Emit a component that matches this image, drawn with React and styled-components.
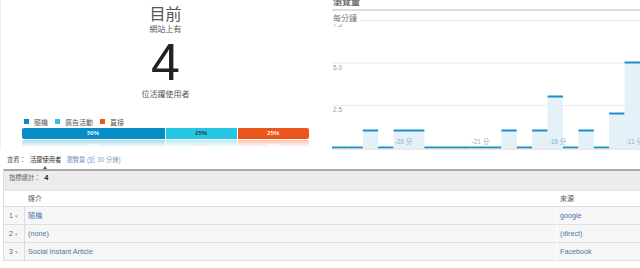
import React from "react";
import styled, { createGlobalStyle } from "styled-components";

const GlobalStyle = createGlobalStyle`
  html, body {
    margin: 0;
    padding: 0;
    background: #fff;
  }
  body {
    width: 640px;
    height: 268px;
    overflow: hidden;
    font-family: "Liberation Sans", "Noto Sans CJK TC", Arial, sans-serif;
    color: #333;
  }
`;

const sources = [
  { label: "隨機", color: "#058dc7", share: 50, text: "#fff" },
  { label: "廣告活動", color: "#24c6e3", share: 25, text: "#333" },
  { label: "直接", color: "#ed561b", share: 25, text: "#fff" },
];

const perMinute = [0, 0, 1, 0, 1, 1, 0, 0, 0, 0, 0, 1, 0, 1, 3, 0, 1, 0, 2, 5, 4];
const minuteLabels = { 4: "-26 分", 9: "-21 分", 14: "-16 分", 19: "-11 分" };

const rows = [
  { medium: "隨機", source: "google" },
  { medium: "(none)", source: "(direct)" },
  { medium: "Social Instant Article", source: "Facebook" },
];

// chart geometry
const STEP = 15.4;
const UNIT = 17;
const BASE = 137;

const PageviewChart = () => (
  <svg width="308" height="139" style={{ display: "block" }}>
    {[7.5, 5.0, 2.5].map((v) => {
      const y = BASE - v * UNIT;
      return (
        <g key={v}>
          <line x1="0" x2="308" y1={y} y2={y} stroke="#ececec" strokeWidth="1" />
          <text x="1" y={y + 6.5} fontSize="6.5" fill="#999" fontFamily="Liberation Sans, sans-serif">
            {v.toFixed(1)}
          </text>
        </g>
      );
    })}
    <rect x="0" y="0" width="28" height="13" fill="#fff" />
    <text x="1" y="10" fontSize="8" fill="#777" fontFamily="Liberation Sans, Noto Sans CJK TC, sans-serif">
      每分鐘
    </text>
    {perMinute.map((v, i) => {
      const x = i * STEP;
      const top = BASE - v * UNIT;
      return (
        <g key={i}>
          {v > 0 && <rect x={x} y={top} width={STEP} height={BASE - top} fill="#e4f1f9" />}
          <rect x={x} y={top - 1.5} width={STEP} height="2" fill="#1a8fca" />
        </g>
      );
    })}
    <line x1="0" x2="308" y1={BASE + 1} y2={BASE + 1} stroke="#d4d4d4" strokeWidth="1" />
    {Object.entries(minuteLabels).map(([i, label]) => (
      <text
        key={i}
        x={i * STEP + 1}
        y="133"
        fontSize="6.5"
        fill="#8fb0cf"
        fontFamily="Liberation Sans, Noto Sans CJK TC, sans-serif"
      >
        {label}
      </text>
    ))}
  </svg>
);

const App = () => {
  return (
    <>
      <GlobalStyle />
      <Page>
        <TopRow>
          <Summary>
            <Now>目前</Now>
            <Sub>網站上有</Sub>
            <Count>4</Count>
            <Sub $gap>位活躍使用者</Sub>
            <Legend>
              {sources.map((s) => (
                <LegendItem key={s.label} $color={s.color}>
                  {s.label}
                </LegendItem>
              ))}
            </Legend>
            <ShareBar>
              {sources.map((s) => (
                <Segment key={s.label} $share={s.share} $color={s.color} $text={s.text}>
                  {s.share}%
                </Segment>
              ))}
            </ShareBar>
          </Summary>
          <ChartPanel>
            <ChartTitle>瀏覽量</ChartTitle>
            <PageviewChart />
          </ChartPanel>
        </TopRow>

        <ViewRow>
          <ViewLabel>查看：</ViewLabel>
          <Tab $active>活躍使用者</Tab>
          <Tab>
            瀏覽量<Muted> (近 30 分鐘)</Muted>
          </Tab>
        </ViewRow>

        <Table>
          <Totals>
            指標總計： <strong>4</strong>
          </Totals>
          <HeaderRow>
            <IndexCell />
            <Cell>媒介</Cell>
            <Cell>來源</Cell>
          </HeaderRow>
          {rows.map((r, i) => (
            <DataRow key={r.medium}>
              <IndexCell>
                {i + 1}
                <Caret>▾</Caret>
              </IndexCell>
              <Cell $line="#dcdcdc">
                <Link>{r.medium}</Link>
              </Cell>
              <Cell $line="#fff">
                <Link>{r.source}</Link>
              </Cell>
            </DataRow>
          ))}
        </Table>
      </Page>
    </>
  );
};

//Styled Components
const Page = styled.div`
  width: 640px;
  display: flex;
  flex-direction: column;
`;

const TopRow = styled.div`
  display: flex;
  height: 150px;
`;

const Summary = styled.section`
  width: 330px;
  flex: none;
  text-align: center;
  border-left: 1px solid #f0f0f0;
  box-sizing: border-box;
`;

const Now = styled.div`
  margin-top: 5px;
  font-size: 16px;
  line-height: 20px;
  color: #555;
`;

const Sub = styled.div`
  margin-top: ${(p) => (p.$gap ? "2px" : "0")};
  font-size: 8px;
  line-height: 10px;
  color: #555;
`;

const Count = styled.div`
  margin-top: 1px;
  font-size: 52px;
  line-height: 52px;
  color: #222;
`;

const Legend = styled.div`
  display: flex;
  align-items: center;
  gap: 7px;
  height: 9px;
  margin: 17px 21px 0 23px;
  font-size: 7px;
  color: #555;
`;

const LegendItem = styled.span`
  display: flex;
  align-items: center;
  gap: 5px;
  &::before {
    content: "";
    width: 5px;
    height: 5px;
    background: ${(p) => p.$color};
  }
`;

const ShareBar = styled.div`
  display: flex;
  height: 11px;
  margin: 2px 21px 0 21px;
  border-radius: 2px;
  overflow: hidden;
  -webkit-box-reflect: below 1px linear-gradient(transparent 35%, rgba(255, 255, 255, 0.35));
`;

const Segment = styled.div`
  flex: ${(p) => p.$share};
  background: ${(p) => p.$color};
  color: ${(p) => p.$text};
  font-size: 6px;
  font-weight: bold;
  line-height: 11px;
  text-align: center;
  & + & {
    border-left: 1px solid #fff;
  }
`;

const ChartPanel = styled.section`
  width: 308px;
  margin-left: 2px;
  overflow: hidden;
`;

const ChartTitle = styled.div`
  margin-top: -4px;
  height: 13px;
  line-height: 13px;
  padding-left: 1px;
  font-size: 9px;
  font-weight: bold;
  color: #666;
  border-bottom: 2px solid #dcdcdc;
`;

const ViewRow = styled.div`
  display: flex;
  align-items: center;
  height: 19px;
  padding-left: 7px;
  font-size: 6.3px;
  color: #555;
`;

const ViewLabel = styled.span`
  margin-right: 4px;
`;

const Tab = styled.span`
  position: relative;
  line-height: 19px;
  margin-right: 5px;
  color: ${(p) => (p.$active ? "#333" : "#5d83bd")};
  &::after {
    content: "";
    display: ${(p) => (p.$active ? "block" : "none")};
    position: absolute;
    left: 50%;
    bottom: 0;
    margin-left: -2.5px;
    border-left: 2.5px solid transparent;
    border-right: 2.5px solid transparent;
    border-bottom: 3px solid #555;
  }
`;

const Muted = styled.span`
  color: #8aa2c4;
`;

const Table = styled.div`
  margin-left: 3px;
  border-left: 1px solid #dcdcdc;
`;

const Totals = styled.div`
  height: 19px;
  line-height: 14px;
  padding-left: 5px;
  border-top: 2px solid #a8a8a8;
  background: #ececec;
  font-size: 6.3px;
  color: #666;
  strong {
    margin-left: 2px;
    font-size: 7.5px;
    color: #222;
  }
`;

const HeaderRow = styled.div`
  display: grid;
  grid-template-columns: 20px 532px 1fr;
  height: 15px;
  line-height: 15px;
  background: #fff;
  border-top: 1px solid #e4e4e4;
  border-bottom: 1px solid #dcdcdc;
  font-size: 7px;
  color: #555;
`;

const DataRow = styled.div`
  display: grid;
  grid-template-columns: 20px 532px 1fr;
  height: 17px;
  line-height: 17px;
  background: #f6f6f6;
  border-bottom: 1px solid #e0e0e0;
  font-size: 7.2px;
`;

const IndexCell = styled.div`
  padding-left: 5px;
  color: #666;
`;

const Caret = styled.span`
  margin-left: 2px;
  font-size: 5px;
  color: #aaa;
`;

const Cell = styled.div`
  padding-left: 3px;
  border-left: 1px solid ${(p) => p.$line || "transparent"};
  white-space: nowrap;
  overflow: hidden;
`;

const Link = styled.span`
  color: #4a76ad;
`;

export default App;
